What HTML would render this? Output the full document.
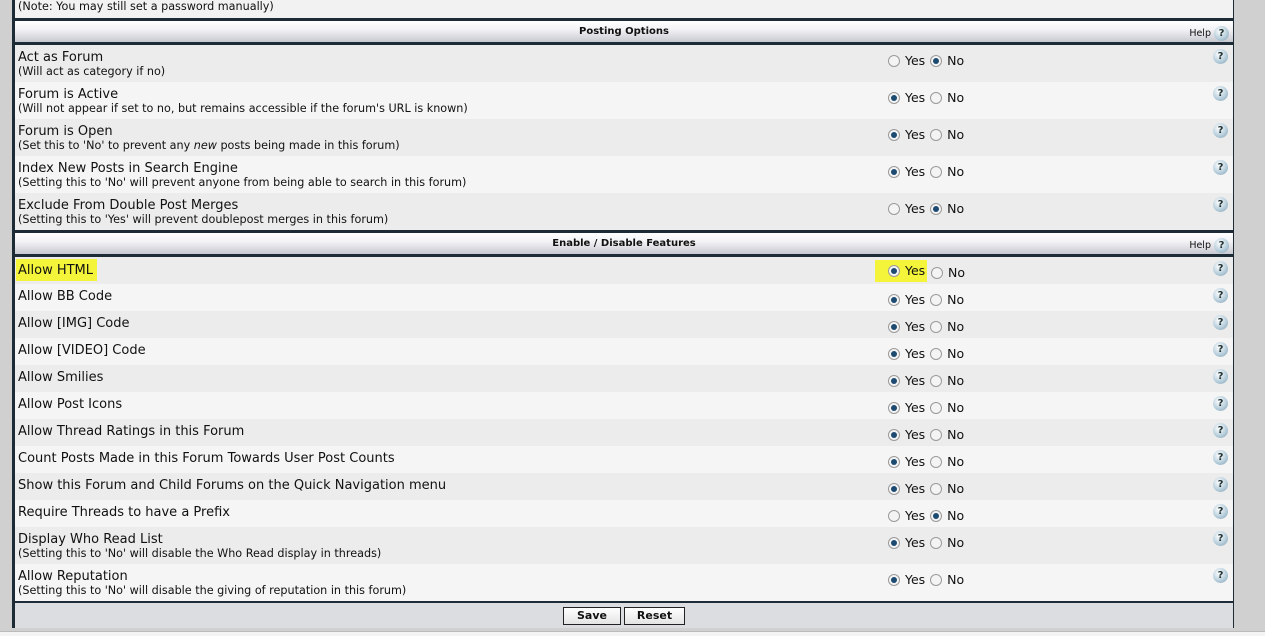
<!DOCTYPE html>
<html><head><style>
body{margin:0;width:1265px;height:635px;background:#d0d0d0;position:relative;overflow:hidden;font-family:"DejaVu Sans","Liberation Sans",sans-serif;color:#111}
#frame{position:absolute;left:12px;top:-2px;width:1222px;height:630px;background:#1d2b36;}
.r{position:absolute;left:15px;width:1218px;}
.t{position:absolute;left:3px;font-size:13px;white-space:nowrap}
.d{position:absolute;left:3px;font-size:11.2px;white-space:nowrap}
.h{position:absolute;left:15px;width:1218px;height:21px;background:linear-gradient(#fff,#f3f3f6 40%,#c8c8d0);font-weight:bold;font-size:10px;text-align:center;line-height:21px}
.help{position:absolute;right:4px;top:2px;font-weight:normal;font-size:9.5px}
.q{display:inline-block;width:15px;height:15px;border-radius:50%;background:radial-gradient(circle at 40% 35%,#fff,#b8cfdc 55%,#7d9cb0);color:#233;font-weight:bold;font-size:10px;line-height:15px;text-align:center;vertical-align:middle}
.qi{position:absolute;right:5px}
.yn{position:absolute;left:873px;font-size:12.5px;white-space:nowrap;word-spacing:1px}
.rad{display:inline-block;width:12px;height:12px;border-radius:50%;border:1px solid #9a9a9a;background:#f4f4f4;vertical-align:-2px;box-sizing:border-box;position:relative}
.on:after{content:"";position:absolute;left:2px;top:2px;width:6px;height:6px;border-radius:50%;background:#1d4a70}
.foot{position:absolute;left:15px;top:603px;width:1218px;height:25px;background:#dcdde0}
.btn{position:absolute;top:4px;border:1px solid #222;background:linear-gradient(#fff,#e4e4e4);font-weight:bold;font-size:11px;text-align:center;line-height:16px;box-sizing:border-box;height:18px}
</style></head><body>
<div id="frame"></div>
<div class="r" style="top:0;height:18px;background:#f2f2f2"><div class="d" style="top:0px">(Note: You may still set a password manually)</div></div>
<div class="h" style="top:21px">Posting Options<span class="help">Help <span class="q">?</span></span></div>

<div class="r" style="top:45px;height:37px;background:#ececec"><div class="t" style="top:5px">Act as Forum</div><div class="d" style="top:20px">(Will act as category if no)</div><div class="yn" style="top:8px"><span class="rad"></span> Yes <span class="rad on"></span> No</div><span class="q qi" style="top:4px">?</span></div>
<div class="r" style="top:82px;height:37px;background:#f5f5f5"><div class="t" style="top:5px">Forum is Active</div><div class="d" style="top:20px">(Will not appear if set to no, but remains accessible if the forum's URL is known)</div><div class="yn" style="top:8px"><span class="rad on"></span> Yes <span class="rad"></span> No</div><span class="q qi" style="top:4px">?</span></div>
<div class="r" style="top:119px;height:37px;background:#ececec"><div class="t" style="top:5px">Forum is Open</div><div class="d" style="top:20px">(Set this to 'No' to prevent any <i>new</i> posts being made in this forum)</div><div class="yn" style="top:8px"><span class="rad on"></span> Yes <span class="rad"></span> No</div><span class="q qi" style="top:4px">?</span></div>
<div class="r" style="top:156px;height:37px;background:#f5f5f5"><div class="t" style="top:5px">Index New Posts in Search Engine</div><div class="d" style="top:20px">(Setting this to 'No' will prevent anyone from being able to search in this forum)</div><div class="yn" style="top:8px"><span class="rad on"></span> Yes <span class="rad"></span> No</div><span class="q qi" style="top:4px">?</span></div>
<div class="r" style="top:193px;height:37px;background:#ececec"><div class="t" style="top:5px">Exclude From Double Post Merges</div><div class="d" style="top:20px">(Setting this to 'Yes' will prevent doublepost merges in this forum)</div><div class="yn" style="top:8px"><span class="rad"></span> Yes <span class="rad on"></span> No</div><span class="q qi" style="top:4px">?</span></div>

<div class="h" style="top:233px">Enable / Disable Features<span class="help">Help <span class="q">?</span></span></div>

<div class="r" style="top:257px;height:27px;background:#ececec"><div class="t" style="left:1px;background:#f4f43a;padding:0 4px 0 2px;height:22px;top:2px;line-height:23px">Allow HTML</div><div class="yn" style="background:#f4f43a;left:860px;padding:3px 2px 4px 13px;top:3px"><span class="rad on"></span> Yes</div><div class="yn" style="top:8px;left:916px"><span class="rad"></span> No</div><span class="q qi" style="top:4px">?</span></div>
<div class="r" style="top:284px;height:27px;background:#f5f5f5"><div class="t" style="top:5px">Allow BB Code</div><div class="yn" style="top:8px"><span class="rad on"></span> Yes <span class="rad"></span> No</div><span class="q qi" style="top:4px">?</span></div>
<div class="r" style="top:311px;height:27px;background:#ececec"><div class="t" style="top:5px">Allow [IMG] Code</div><div class="yn" style="top:8px"><span class="rad on"></span> Yes <span class="rad"></span> No</div><span class="q qi" style="top:4px">?</span></div>
<div class="r" style="top:338px;height:27px;background:#f5f5f5"><div class="t" style="top:5px">Allow [VIDEO] Code</div><div class="yn" style="top:8px"><span class="rad on"></span> Yes <span class="rad"></span> No</div><span class="q qi" style="top:4px">?</span></div>
<div class="r" style="top:365px;height:27px;background:#ececec"><div class="t" style="top:5px">Allow Smilies</div><div class="yn" style="top:8px"><span class="rad on"></span> Yes <span class="rad"></span> No</div><span class="q qi" style="top:4px">?</span></div>
<div class="r" style="top:392px;height:27px;background:#f5f5f5"><div class="t" style="top:5px">Allow Post Icons</div><div class="yn" style="top:8px"><span class="rad on"></span> Yes <span class="rad"></span> No</div><span class="q qi" style="top:4px">?</span></div>
<div class="r" style="top:419px;height:27px;background:#ececec"><div class="t" style="top:5px">Allow Thread Ratings in this Forum</div><div class="yn" style="top:8px"><span class="rad on"></span> Yes <span class="rad"></span> No</div><span class="q qi" style="top:4px">?</span></div>
<div class="r" style="top:446px;height:27px;background:#f5f5f5"><div class="t" style="top:5px">Count Posts Made in this Forum Towards User Post Counts</div><div class="yn" style="top:8px"><span class="rad on"></span> Yes <span class="rad"></span> No</div><span class="q qi" style="top:4px">?</span></div>
<div class="r" style="top:473px;height:27px;background:#ececec"><div class="t" style="top:5px">Show this Forum and Child Forums on the Quick Navigation menu</div><div class="yn" style="top:8px"><span class="rad on"></span> Yes <span class="rad"></span> No</div><span class="q qi" style="top:4px">?</span></div>
<div class="r" style="top:500px;height:27px;background:#f5f5f5"><div class="t" style="top:5px">Require Threads to have a Prefix</div><div class="yn" style="top:8px"><span class="rad"></span> Yes <span class="rad on"></span> No</div><span class="q qi" style="top:4px">?</span></div>
<div class="r" style="top:527px;height:37px;background:#ececec"><div class="t" style="top:5px">Display Who Read List</div><div class="d" style="top:20px">(Setting this to 'No' will disable the Who Read display in threads)</div><div class="yn" style="top:8px"><span class="rad on"></span> Yes <span class="rad"></span> No</div><span class="q qi" style="top:4px">?</span></div>
<div class="r" style="top:564px;height:37px;background:#f5f5f5"><div class="t" style="top:5px">Allow Reputation</div><div class="d" style="top:20px">(Setting this to 'No' will disable the giving of reputation in this forum)</div><div class="yn" style="top:8px"><span class="rad on"></span> Yes <span class="rad"></span> No</div><span class="q qi" style="top:4px">?</span></div>

<div class="foot"><div class="btn" style="left:548px;width:58px">Save</div><div class="btn" style="left:609px;width:61px">Reset</div></div>
<div style="position:absolute;left:0;top:631px;width:1265px;height:4px;background:#f4f4f4;border-top:1px solid #bbb"></div>
</body></html>
